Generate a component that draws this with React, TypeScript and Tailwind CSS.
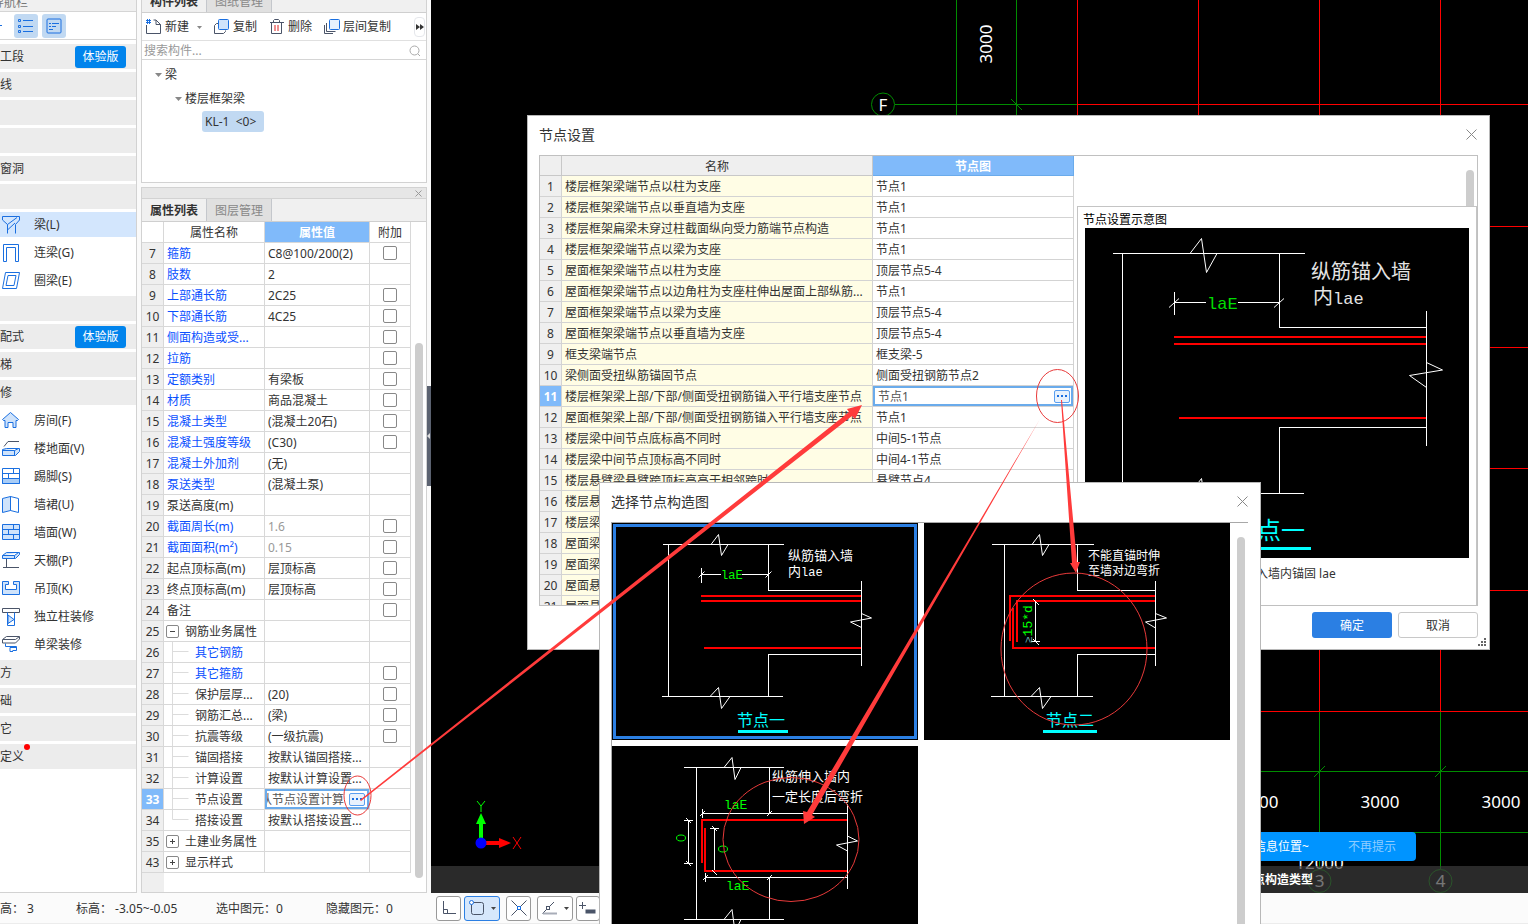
import React, {Fragment} from 'react'
import type {ReactNode} from 'react'

type PropertyRow = {
  no: number
  name: string
  value?: string
  check?: boolean
  kind?: 'link' | 'muted' | 'group' | 'child' | 'childLink'
  open?: boolean
}

const properties: PropertyRow[] = [
  {no: 7, name: '箍筋', value: 'C8@100/200(2)', check: true, kind: 'link'},
  {no: 8, name: '肢数', value: '2', kind: 'link'},
  {no: 9, name: '上部通长筋', value: '2C25', check: true, kind: 'link'},
  {no: 10, name: '下部通长筋', value: '4C25', check: true, kind: 'link'},
  {no: 11, name: '侧面构造或受...', check: true, kind: 'link'},
  {no: 12, name: '拉筋', check: true, kind: 'link'},
  {no: 13, name: '定额类别', value: '有梁板', check: true, kind: 'link'},
  {no: 14, name: '材质', value: '商品混凝土', check: true, kind: 'link'},
  {no: 15, name: '混凝土类型', value: '(混凝土20石)', check: true, kind: 'link'},
  {no: 16, name: '混凝土强度等级', value: '(C30)', check: true, kind: 'link'},
  {no: 17, name: '混凝土外加剂', value: '(无)', kind: 'link'},
  {no: 18, name: '泵送类型', value: '(混凝土泵)', kind: 'link'},
  {no: 19, name: '泵送高度(m)'},
  {no: 20, name: '截面周长(m)', value: '1.6', check: true, kind: 'muted'},
  {no: 21, name: '截面面积(m²)', value: '0.15', check: true, kind: 'muted'},
  {no: 22, name: '起点顶标高(m)', value: '层顶标高', check: true},
  {no: 23, name: '终点顶标高(m)', value: '层顶标高', check: true},
  {no: 24, name: '备注', check: true},
  {no: 25, name: '钢筋业务属性', kind: 'group', open: true},
  {no: 26, name: '其它钢筋', kind: 'childLink'},
  {no: 27, name: '其它箍筋', check: true, kind: 'childLink'},
  {no: 28, name: '保护层厚...', value: '(20)', check: true, kind: 'child'},
  {no: 29, name: '钢筋汇总...', value: '(梁)', check: true, kind: 'child'},
  {no: 30, name: '抗震等级', value: '(一级抗震)', check: true, kind: 'child'},
  {no: 31, name: '锚固搭接', value: '按默认锚固搭接...', kind: 'child'},
  {no: 32, name: '计算设置', value: '按默认计算设置...', kind: 'child'},
  {no: 33, name: '节点设置', value: '认节点设置计算', kind: 'child'},
  {no: 34, name: '搭接设置', value: '按默认搭接设置...', kind: 'child'},
  {no: 35, name: '土建业务属性', kind: 'group'},
  {no: 43, name: '显示样式', kind: 'group'},
]

const nodes: [string, string][] = [
  ['楼层框架梁端节点以柱为支座', '节点1'],
  ['楼层框架梁端节点以垂直墙为支座', '节点1'],
  ['楼层框架扁梁未穿过柱截面纵向受力筋端节点构造', '节点1'],
  ['楼层框架梁端节点以梁为支座', '节点1'],
  ['屋面框架梁端节点以柱为支座', '顶层节点5-4'],
  ['屋面框架梁端节点以边角柱为支座柱伸出屋面上部纵筋...', '节点1'],
  ['屋面框架梁端节点以梁为支座', '顶层节点5-4'],
  ['屋面框架梁端节点以垂直墙为支座', '顶层节点5-4'],
  ['框支梁端节点', '框支梁-5'],
  ['梁侧面受扭纵筋锚固节点', '侧面受扭钢筋节点2'],
  ['楼层框架梁上部/下部/侧面受扭钢筋锚入平行墙支座节点', '节点1'],
  ['屋面框架梁上部/下部/侧面受扭钢筋锚入平行墙支座节点', '节点1'],
  ['楼层梁中间节点底标高不同时', '中间5-1节点'],
  ['楼层梁中间节点顶标高不同时', '中间4-1节点'],
  ['楼层悬臂梁悬臂跨顶标高高于相邻跨时', '悬臂节点4'],
  ['楼层悬', ''],
  ['楼层梁', ''],
  ['屋面梁', ''],
  ['屋面梁', ''],
  ['屋面悬', ''],
  ['屋面悬', ''],
]

const B = '#1a6fe0'
const D = '#4a5468'
const L = '#cfe3fb'

const navIcons: Record<string, ReactNode> = {
  beam: (
    <g fill="none" stroke={B}>
      <path d="M6.500 18.500v-9l-5-4.500V1.500h17V5l-4 4.500v9" />
      <path d="M6.500 9.500l9.500-7M7 14.500l7-6.500" />
    </g>
  ),
  link: <path d="M2.500 18.500v-17h15v17h-3v-14h-9v14z" fill="none" stroke={B} />,
  ring: (
    <g fill="none" stroke={B}>
      <path d="M4.500 1.500h14l-3 16h-14z" />
      <path d="M7 4.500h8l-2 10H5z" />
    </g>
  ),
  house: <path d="M9.500 1.500l8 7-1 1h-1.500v7h-3v-5h-5v5h-3v-7H2.500l-1-1z" fill={L} stroke={B} />,
  floor: (
    <g fill="none">
      <path d="M18 2.500H7l-4 5" stroke={D} />
      <path d="M1.500 10.500l4-1h13v3l-4 4h-13zM1.500 11.500h12l4-2M13.500 11.500v5" fill={L} stroke={B} />
    </g>
  ),
  skirting: (
    <g stroke={B}>
      <path d="M1.500 1.500h17v15h-17z" fill="none" />
      <path d="M1.500 11.500h17v5h-17z" fill="#a9cdf7" />
      <path d="M1.500 6.500h17M12.500 1.500v5M7.500 6.500v5" />
    </g>
  ),
  dado: (
    <g stroke={B}>
      <path d="M1.500 3.500l8-2v14l-8 2z" fill={L} />
      <path d="M9.500 1.500l8 2v14l-8-2z" fill="none" />
    </g>
  ),
  wall: (
    <g stroke={B}>
      <path d="M1.500 1.500h17v15h-17z" fill={L} />
      <path d="M1.500 6.500h17M1.500 11.500h17M12.500 1.500v5M7.500 6.500v5M12.500 11.500v5" />
    </g>
  ),
  canopy: (
    <g fill="none">
      <path d="M1.500 4.500l4-3h13v2l-4 4h-13zM1.500 4.500h12l4-3M13.500 4.500v3" fill={L} stroke={B} />
      <path d="M5.500 8v8.500M2 16.500h16" stroke={D} />
    </g>
  ),
  ceiling: <path d="M1.500 2.500h6v3h-3v5h11v-5h-3v-3h6v13h-17z" fill={L} stroke={B} />,
  column: (
    <g fill="none">
      <path d="M1.500 1.500h17v4h-17z" stroke={D} />
      <path d="M6.500 5.500v13h7v-13" stroke={B} />
      <path d="M7 8l6 4.500-6 4z" fill={L} stroke={B} />
    </g>
  ),
  single: (
    <g fill="none">
      <path d="M1.500 4.500l4-3h13l-4 3zM1.500 5v3h13l4-4v-2" stroke={D} />
      <path d="M4.500 8.500v3h11v4h-4M15 12.500H9v4h3" stroke={B} />
    </g>
  ),
}

type NavRow = {label?: string; icon?: string; trial?: boolean; active?: boolean; dot?: boolean}

const navRows: NavRow[] = [
  {label: '工段', trial: true},
  {label: '线'},
  {},
  {},
  {label: '窗洞'},
  {},
  {label: '梁(L)', icon: 'beam', active: true},
  {label: '连梁(G)', icon: 'link'},
  {label: '圈梁(E)', icon: 'ring'},
  {},
  {label: '配式', trial: true},
  {label: '梯'},
  {label: '修'},
  {label: '房间(F)', icon: 'house'},
  {label: '楼地面(V)', icon: 'floor'},
  {label: '踢脚(S)', icon: 'skirting'},
  {label: '墙裙(U)', icon: 'dado'},
  {label: '墙面(W)', icon: 'wall'},
  {label: '天棚(P)', icon: 'canopy'},
  {label: '吊顶(K)', icon: 'ceiling'},
  {label: '独立柱装修', icon: 'column'},
  {label: '单梁装修', icon: 'single'},
  {label: '方'},
  {label: '础'},
  {label: '它'},
  {label: '定义', dot: true},
]

const Navigation = () => (
  <nav className="flex w-[137px] shrink-0 flex-col overflow-hidden border-r border-b border-[#d2d2d2] bg-white">
    <div className="flex h-3 shrink-0 items-end border-b border-[#d5d5d5] bg-[#f0f0f0]">
      <span className="-ml-2 leading-4 text-[#777]">导航栏</span>
    </div>
    <div className="flex h-7 shrink-0 items-center gap-1 border-b border-[#d5d5d5]">
      <span className="mr-2 h-px w-[2px] bg-[#1a6fe0]" />
      <button aria-label="列表" className="flex size-6 items-center justify-center rounded-[3px] bg-[#c1d9f2]">
        <svg width="16" height="16" fill="none" stroke={B}>
          <path d="M5 2.500h10M5 8.500h10M5 13.500h10" />
          <path d="M.5 1.500h2v2h-2zM.5 7.500h2v2h-2zM.5 12.500h2v2h-2z" />
        </svg>
      </button>
      <button aria-label="详情" className="flex size-6 items-center justify-center rounded-[3px] bg-[#c1d9f2]">
        <svg width="16" height="16" fill="none" stroke={B}>
          <rect x="1" y="1" width="14" height="14" rx="1" />
          <path d="M3 5.500h2M6 5.500h7M3 8.500h2M6 8.500h4M3 11.500h4" />
        </svg>
      </button>
    </div>
    <ul className="mt-1 flex flex-col gap-[3px]">
      {navRows.map((row, i) => (
        <li
          key={i}
          className={`flex h-[25px] items-center ${
            row.active ? 'bg-[#d3e6fd]' : row.icon ? 'bg-white' : 'bg-[#ececec]'
          }`}
        >
          {row.icon && (
            <svg width="20" height="19" className="mr-[13px] ml-px">
              {navIcons[row.icon]}
            </svg>
          )}
          <span className="relative">
            {row.label}
            {row.dot && <i className="absolute -top-1 -right-[6px] size-[6px] rounded-full bg-[#f00]" />}
          </span>
          {row.trial && (
            <button className="mr-[10px] ml-auto h-[22px] w-[51px] rounded-[3px] bg-[#0184ec] text-white">
              体验版
            </button>
          )}
        </li>
      ))}
    </ul>
  </nav>
)

const Tabs = ({names}: {names: string[]}) => (
  <div className="flex h-[23px] shrink-0 border-b border-[#cfcfcf] bg-[#f0f0f0]">
    <button className="w-[65px] border-r border-[#c4c7cc] pt-[2px] font-bold">{names[0]}</button>
    <button className="w-[65px] border-r border-[#c4c7cc] bg-[#e0e0e0] pt-[2px] text-[#888]">{names[1]}</button>
  </div>
)

const Caret = () => (
  <svg width="7" height="4">
    <path d="M0 0h7L3.500 4z" fill="#888" />
  </svg>
)

const ComponentList = () => (
  <section className="flex h-[183px] shrink-0 flex-col border border-t-0 border-[#d2d2d2] bg-white">
    <div className="flex h-[13px] shrink-0 flex-col justify-end overflow-hidden">
      <Tabs names={['构件列表', '图纸管理']} />
    </div>
    <div className="flex h-7 shrink-0 items-center border-b border-[#e0e0e0] pt-px pl-1">
      <button className="flex items-center gap-[3px]">
        <svg width="16" height="16" fill="none">
          <path d="M.5 6v8.500h14V5.500L10 1H7.500M10 1v4.500h4.500" stroke={D} />
          <path d="M0 1.500h5M0 3.500h5M1.500 0v5M3.500 0v5" stroke={B} />
        </svg>
        新建
        <svg width="5" height="3" className="ml-[5px]">
          <path d="M0 0h5L2.500 3z" fill="#888" />
        </svg>
      </button>
      <button className="ml-3 flex items-center gap-[3px]">
        <svg width="16" height="16" fill="none">
          <path d="M4.500 4.500h-2l-2 2v8h9l2-2v-1" stroke={D} />
          <rect x="4.500" y=".5" width="10" height="10" rx="1" fill={L} stroke={B} />
        </svg>
        复制
      </button>
      <button className="ml-3 flex items-center gap-[3px]">
        <svg width="16" height="16" fill="none">
          <path d="M1 3.500h14M4.500 3.500v-2l1-1h4l1 1v2M2.500 3.500v11h10v-11" stroke={D} />
          <path d="M6 6v6M9 6v6" stroke="#e02020" />
        </svg>
        删除
      </button>
      <button className="ml-3 flex items-center gap-[3px]">
        <svg width="16" height="16" fill="none">
          <path d="M.5 6v8.500H9M2.500 4v8.500h9" stroke={D} />
          <rect x="5.500" y=".5" width="10" height="10" rx="1" fill="#e6f1fd" stroke={B} />
        </svg>
        层间复制
      </button>
      <button aria-label="更多" className="mr-px ml-auto flex h-5 w-[11px] items-center justify-center rounded border border-gray-200">
        <svg width="8" height="6">
          <path d="M0 0l4 3-4 3zM4 0l4 3-4 3z" fill="#333" />
        </svg>
      </button>
    </div>
    <div className="flex h-[19px] shrink-0 items-center border-b border-[#d5d5d5] pt-[2px] pr-[6px] pl-[2px]">
      <input aria-label="搜索构件" placeholder="搜索构件..." className="w-full min-w-0 leading-4 placeholder:text-[#999]" />
      <svg width="12" height="12" fill="none" stroke="#aaa">
        <circle cx="5.500" cy="5.500" r="4.500" />
        <path d="M9 9l2 2" />
      </svg>
    </div>
    <ul className="flex flex-col pt-[3px] leading-6">
      <li className="flex items-center gap-[3px] pl-[13px]">
        <Caret />梁
      </li>
      <li className="flex items-center gap-[3px] pl-[33px]">
        <Caret />
        楼层框架梁
      </li>
      <li className="flex h-6 items-start pl-[60px]">
        <span className="w-[62px] rounded-[3px] bg-[#c1d9f2] px-[3px] leading-[21px] whitespace-pre">{'KL-1  <0>'}</span>
      </li>
    </ul>
  </section>
)

const More = () => (
  <button
    aria-label="更多"
    className="flex h-[13px] w-4 shrink-0 items-center justify-center gap-[2px] rounded-[2px] border border-[#5a9ff0] bg-[#e8f2fd]"
  >
    <i className="size-[2px] bg-[#1a6fe0]" />
    <i className="size-[2px] bg-[#1a6fe0]" />
    <i className="size-[2px] bg-[#1a6fe0]" />
  </button>
)

const PropertyName = ({row}: {row: PropertyRow}) => {
  if (row.kind === 'group') {
    return (
      <div className="flex h-5 items-center pl-[2px] leading-[22px]">
        <button
          aria-label={row.name}
          className="mr-[6px] flex size-[13px] items-center justify-center rounded-[2px] border border-[#888]"
        >
          <svg width="5" height="5" stroke="#444">
            <path d={row.open ? 'M0 2.500h5' : 'M0 2.500h5M2.500 0v5'} />
          </svg>
        </button>
        <span className="h-5">{row.name}</span>
      </div>
    )
  }
  if (row.kind === 'child' || row.kind === 'childLink') {
    return (
      <div className={`flex h-5 pl-2 leading-[22px] ${row.kind === 'childLink' ? 'text-[#0a50ff]' : ''}`}>
        <svg width="17" height="20" className="mr-[6px]" stroke="#dcdcdc">
          <path d={row.no === 34 ? 'M.5 0v9.500h16' : 'M.5 0v20M.5 9.500h16'} fill="none" />
        </svg>
        <span>{row.name}</span>
      </div>
    )
  }
  return <div className={`h-5 pl-[3px] leading-[22px] ${row.kind ? 'text-[#0a50ff]' : ''}`}>{row.name}</div>
}

const PropertyList = () => (
  <section className="mt-1 flex min-h-0 flex-1 flex-col border border-[#d2d2d2] bg-white">
    <div className="flex h-[11px] shrink-0 items-center justify-end border-b border-[#d2d2d2] bg-[#e6e6e6] pr-1">
      <button aria-label="关闭">
        <svg width="7" height="7" stroke="#999">
          <path d="M.5.5l6 6M6.500.5l-6 6" />
        </svg>
      </button>
    </div>
    <Tabs names={['属性列表', '图层管理']} />
    <div className="flex min-h-0 flex-1 overflow-hidden">
      <div className="w-[22px] shrink-0 bg-[#efefef]" />
      <table className="-ml-[22px] w-[269px] table-fixed border-separate border-spacing-0 self-start">
        <colgroup>
          <col className="w-[22px]" />
          <col className="w-[101px]" />
          <col className="w-[105px]" />
          <col className="w-[41px]" />
        </colgroup>
        <thead>
          <tr className="h-[21px] bg-white *:border-r *:border-b *:border-[#d8d8d8] *:p-0 *:font-normal">
            <th />
            <th>
              <div className="h-5 leading-[22px]">属性名称</div>
            </th>
            <th className="bg-[#80bafa] text-white">
              <div className="h-5 leading-[22px] font-bold">属性值</div>
            </th>
            <th>
              <div className="h-5 leading-[22px]">附加</div>
            </th>
          </tr>
        </thead>
        <tbody>
          {properties.map(row => (
            <tr key={row.no} className="h-[21px] *:border-r *:border-b *:border-[#d8d8d8] *:p-0">
              <td
                className={`text-center ${
                  row.no === 33 ? 'bg-[#80bafa] font-bold text-white' : 'bg-[#efefef]'
                }`}
              >
                <div className="h-5 leading-[22px]">{row.no}</div>
              </td>
              <td>
                <PropertyName row={row} />
              </td>
              {row.no === 33 ? (
                <td>
                  <div className="flex h-5 items-center border-2 border-[#6aabeb] pr-[2px]">
                    <input
                      aria-label={row.name}
                      defaultValue={row.value}
                      className="h-4 w-full min-w-0 pt-[2px] indent-[-7px] leading-4 text-[#555]"
                    />
                    <More />
                  </div>
                </td>
              ) : (
                <td className={row.kind === 'muted' ? 'text-[#999]' : ''}>
                  <div className="h-5 pl-[3px] leading-[22px] whitespace-nowrap">{row.value}</div>
                </td>
              )}
              <td>
                {row.check && (
                  <input
                    type="checkbox"
                    aria-label={`${row.name}附加`}
                    className="mx-auto block size-[14px] appearance-none rounded-[2px] border border-[#888]"
                  />
                )}
              </td>
            </tr>
          ))}
        </tbody>
      </table>
      <div className="mt-[121px] mr-[3px] mb-[14px] ml-auto w-2 rounded-full bg-[#cdcdcd]" />
    </div>
  </section>
)

const grid = {red: [226.5, 347.5, 468.5, 590.5, 711.5], col: [1077.5, 1198.5, 1319.5, 1440.5]}

const Drawing = () => (
  <svg className="absolute inset-0" width="1097" height="893" viewBox="431 0 1097 893" fontSize="17" fill="#fff">
    <g stroke="#f00" strokeWidth="1" shapeRendering="crispEdges">
      {grid.red.map(y => (
        <path key={y} d={`M1077 ${y}H1528`} />
      ))}
      {grid.col.map(x => (
        <path key={x} d={`M${x} 0V711`} />
      ))}
      <path d="M1077 104.500H1528" />
    </g>
    <g stroke="#008c00" fill="none">
      <path
        d="M956 0v115M1016.500 0v115M895 104.500h182M1319.500 712v157M1440.500 712v157M1261 771.500h267M1261 832.500h267"
        shapeRendering="crispEdges"
      />
      <path d="M1011 99l11 11M1314 777l11-11M1435 777l11-11" />
      <circle cx="883" cy="104.500" r="11.500" />
      <circle cx="1319.500" cy="881" r="11.500" />
      <circle cx="1440.500" cy="881" r="11.500" />
    </g>
    <g textAnchor="middle">
      <text x="883" y="111">F</text>
      <text x="1319.500" y="887">3</text>
      <text x="1440.500" y="887">4</text>
      <text x="1259" y="808">3000</text>
      <text x="1380" y="808">3000</text>
      <text x="1501" y="808">3000</text>
      <text x="1319.500" y="869">12000</text>
      <text transform="translate(992 44) rotate(-90)">3000</text>
    </g>
    <g stroke="#0f0" fill="#0f0">
      <path d="M481 843v-20" strokeWidth="4" />
      <path d="M481 813l5 11h-10z" stroke="none" />
      <path d="M477 801l4 5 4-5M481 806v6" fill="none" />
    </g>
    <path d="M481 843h20" stroke="#f00" strokeWidth="4" />
    <path d="M499 838l12 5-12 5z" fill="#f00" />
    <path d="M513 837l8 12M521 837l-8 12" stroke="#f00" />
    <circle cx="481" cy="843" r="5.500" fill="#00f" />
  </svg>
)

const Canvas = () => (
  <main className="relative min-w-0 flex-1 overflow-hidden bg-black">
    <Drawing />
    <div className="absolute bottom-0 left-0 h-[27px] w-full bg-[#3c3c3c]/70 pl-[810px] text-[12px] leading-[27px] font-bold text-white">
      节点构造类型
    </div>
    <div className="absolute bottom-8 left-[400px] flex h-[29px] w-[585px] items-center justify-end gap-[39px] rounded bg-[#0094ff] pr-5 text-white">
      <span>信息位置~</span>
      <button className="text-[#8fcdff]">不再提示</button>
    </div>
  </main>
)

const mono = "'Liberation Mono', 'Noto Sans CJK SC', monospace"

/* Beam anchorage detail, drawn on a 384 x 330 sheet */
const NodePreview = () => (
  <svg width="384" height="330" className="block bg-black" fill="none" stroke="#fff">
    <g shapeRendering="crispEdges">
      <path d="M28 25.500h192M37.500 25.500v240M194.500 25.500v74h147M341.500 83v135M341.500 199.500h-147v66M28 265.500h191" />
      <path d="M89.500 64v23M89.500 74.500H121M153 74.500h41" />
      <path d="M89 109h252M89 116h252M94 190h247" stroke="#f00" strokeWidth="2" />
      <path d="M150 320.500h76" stroke="#0ff" strokeWidth="3" />
    </g>
    <path d="M105 25.500l11.500-15 5 34 10.500-19M341.500 134.500l16 7.500-33 5.500 17 12M105 265.500l11.500-15 5 34 10.500-19" />
    <path d="M84 79.500l10-9M189 79.500l10-9" />
    <g stroke="none" fontFamily={mono}>
      <text x="122" y="81" fontSize="17" fill="#0d0">
        laE
      </text>
      <text x="226" y="51" fontSize="20" fill="#e4e4e4">
        纵筋锚入墙
      </text>
      <text x="228" y="76" fontSize="20" fill="#e4e4e4">
        内<tspan fontSize="17">lae</tspan>
      </text>
      <text x="148" y="311" fontSize="24" fill="#0ff">
        节点一
      </text>
    </g>
  </svg>
)

type SheetProps = {
  title?: string
  titleX?: number
  lines: string[]
  textX: number
  textY?: number
  size: number
  step: number
  children: ReactNode
}

const Sheet = ({title, titleX = 0, lines, textX, textY = 37, size, step, children}: SheetProps) => (
  <svg width="306" height="217" className="block bg-black" fill="none" stroke="#fff" fontFamily={mono}>
    {children}
    <g stroke="none" fill="#fff">
      {lines.map((line, i) => (
        <text key={line} x={textX} y={textY + i * step} fontSize={size}>
          {line.endsWith('lae') ? (
            <Fragment>
              内<tspan fontSize="12">lae</tspan>
            </Fragment>
          ) : (
            line
          )}
        </text>
      ))}
      {title && (
        <text x={titleX} y="203" fontSize="16" fill="#0ff">
          {title}
        </text>
      )}
    </g>
  </svg>
)

const SheetOne = () => (
  <Sheet title="节点一" titleX={125} lines={['纵筋锚入墙', '内lae']} textX={176} size={13} step={16}>
    <g shapeRendering="crispEdges">
      <path d="M51 21.500h121M56.500 21.500v152M156.500 21.500v46h93M249.500 58v85M249.500 131.500h-93v42M50 173.500h121" />
      <path d="M89.500 45v15M89.500 51.500H109M130 51.500h26" />
      <path d="M89 73h160M89 78h160M92 125h157" stroke="#f00" strokeWidth="2" />
      <path d="M126 208.500h50" stroke="#0ff" strokeWidth="3" />
      <rect x="2.500" y="2.500" width="301" height="212" stroke="#2b7fe3" strokeWidth="3" />
    </g>
    <path d="M99 21.500l7.500-10 3 21 6.500-11M98 173.500l8.500-9 3 21 8.500-12M249.500 90.500l10 4.500-21 4 11 5.500" />
    <path d="M86.500 54.500l6-6M153.500 54.500l6-6" />
    <text x="109" y="56" fontSize="12" fill="#0f0" stroke="none">
      laE
    </text>
  </Sheet>
)

const SheetTwo = () => (
  <Sheet title="节点二" titleX={122} lines={['不能直锚时伸', '至墙对边弯折']} textX={164} size={12} step={15}>
    <g shapeRendering="crispEdges">
      <path d="M68 21.500h102M80.500 21.500v152M153.500 21.500v46h78M231.500 58v85M231.500 131.500h-78v42M67 173.500h102" />
      <path d="M111.500 78v41M107 118.500h9" />
      <path d="M86 118V73h145M93 119V78h138M89 85v40h142" stroke="#f00" strokeWidth="2" />
      <path d="M119 208.500h54" stroke="#0ff" strokeWidth="3" />
    </g>
    <path d="M108 21.500l7.500-10 3 21 6.500-11M107 173.500l8.500-9 3 21 8.500-12M231.500 90.500l11 4.500-21 4 10 6" />
    <path d="M109 76l6 6M109 116l6 6" />
    <text transform="translate(108 120) rotate(-90)" fontSize="13" stroke="none" fill="#0f0">
      <tspan fill="#6ab0b0" fontSize="11">≥</tspan>15*d
    </text>
  </Sheet>
)

const SheetThree = () => (
  <Sheet lines={['纵筋伸入墙内', '一定长度后弯折']} textX={160} textY={35} size={13} step={20}>
    <g shapeRendering="crispEdges">
      <path d="M72 21.500h100M84.500 21.500v152M157.500 21.500v46M235.500 58v85M157.500 131.500v42M72 173.500h100" />
      <path d="M90.500 63v9M90.500 67.500h145M93.500 127v9M93.500 131.500h142M76.500 74v44M72 74.500h9M72 117.500h9M102.500 82v44M98 82.500h9" />
      <path d="M90 117V74h145M93 82v43h142" stroke="#f00" strokeWidth="2" />
    </g>
    <path d="M112 21.500l8-10 3 22 6-12M112 173.500l8-10 3 22 6-12M235.500 90l10 5-21 4 11 6" />
    <path d="M88 70l5-5M155 70l5-5M91 134l5-5M155 134l5-5M74 72l5 5M74 115l5 5M100 80l5 5M100 124l5 5" />
    <g stroke="none" fill="#0f0" fontSize="13">
      <text x="112" y="63">laE</text>
      <text x="114" y="144">laE</text>
    </g>
    <g stroke="#0f0">
      <ellipse cx="69" cy="92" rx="4.500" ry="3" />
      <ellipse cx="111" cy="103" rx="4.500" ry="3" />
    </g>
  </Sheet>
)

const Close = () => (
  <button aria-label="关闭">
    <svg width="11" height="11" stroke="#888">
      <path d="M.5.5l10 10M10.500.5l-10 10" />
    </svg>
  </button>
)

const NodeDialog = () => (
  <div
    role="dialog"
    aria-label="节点设置"
    className="absolute top-[115px] left-[527px] flex h-[535px] w-[963px] flex-col border border-[#b8b8b8] bg-white px-[11px]"
  >
    <header className="mb-[2px] flex h-[37px] shrink-0 items-center justify-between pr-px text-[14px]">
      节点设置
      <Close />
    </header>
    <div className="flex h-[451px] shrink-0 overflow-hidden border border-[#c0c0c0]">
      <table className="w-[534px] shrink-0 table-fixed border-separate border-spacing-0 self-start">
        <colgroup>
          <col className="w-[22px]" />
          <col className="w-[311px]" />
          <col className="w-[201px]" />
        </colgroup>
        <thead>
          <tr className="h-5 *:border-r *:border-b *:border-[#c8c8c8] *:bg-[#efefef] *:p-0 *:font-normal">
            <th />
            <th>
              <div className="h-[19px] leading-[21px]">名称</div>
            </th>
            <th className="border-[#6aabeb]! bg-[#80bafa]! text-white">
              <div className="h-[19px] leading-[21px] font-bold">节点图</div>
            </th>
          </tr>
        </thead>
        <tbody>
          {nodes.map(([name, value], i) => (
            <tr key={i} className="h-[21px] *:border-r *:border-b *:border-[#d3d3d3] *:p-0 *:whitespace-nowrap">
              <td className={`text-center ${i === 10 ? 'bg-[#80bafa] font-bold text-white' : 'bg-[#efefef]'}`}>
                <div className="h-5 leading-[22px]">{i + 1}</div>
              </td>
              <td className="bg-[#fffde5]">
                <div className="h-5 pl-[3px] leading-[22px]">{name}</div>
              </td>
              {i === 10 ? (
                <td>
                  <div className="flex h-5 items-center border-2 border-[#6aabeb] pr-px pl-[3px]">
                    <input
                      aria-label={name}
                      defaultValue={value}
                      className="h-4 w-full min-w-0 pt-[2px] leading-4 text-[#555]"
                    />
                    <More />
                  </div>
                </td>
              ) : (
                <td>
                  <div className="h-5 pl-[3px] leading-[22px]">{value}</div>
                </td>
              )}
            </tr>
          ))}
        </tbody>
      </table>
      <div className="ml-[3px] flex min-w-0 flex-1 flex-col">
        <div className="mt-[14px] mr-[3px] ml-auto h-9 w-2 shrink-0 rounded-t-full bg-[#cdcdcd]" />
        <div className="flex flex-1 flex-col border-t border-r border-l border-[#c4c4c4] pl-[7px]">
          <p className="-ml-[2px] h-[21px] shrink-0 leading-[26px] text-black">节点设置示意图</p>
          <NodePreview />
          <p className="ml-[171px] leading-8">入墙内锚固 lae</p>
        </div>
      </div>
    </div>
    <footer className="mt-[6px] flex justify-end gap-[6px]">
      <button className="h-[26px] w-20 rounded-[3px] bg-[#2b7fe3] pt-[2px] text-white">确定</button>
      <button className="h-[26px] w-20 rounded-[3px] border border-[#c8c8c8] pt-[2px]">取消</button>
    </footer>
    <svg width="8" height="8" className="absolute right-[3px] bottom-[3px]" fill="#666">
      <path d="M6 0h2v2H6zM6 3h2v2H6zM3 3h2v2H3zM6 6h2v2H6zM3 6h2v2H3zM0 6h2v2H0z" />
    </svg>
  </div>
)

const PickerDialog = () => (
  <div
    role="dialog"
    aria-label="选择节点构造图"
    className="absolute top-[482px] bottom-0 left-[599px] flex w-[662px] flex-col overflow-hidden border border-b-0 border-[#b8b8b8] bg-white pr-3 pl-[11px]"
  >
    <header className="mb-[2px] flex h-[37px] shrink-0 items-center justify-between text-[14px]">
      选择节点构造图
      <Close />
    </header>
    <div className="flex min-h-0 flex-1 border-t border-l border-[#a8a8a8]">
      <div className="grid grid-cols-[306px_306px] content-start gap-[6px]">
        <SheetOne />
        <SheetTwo />
        <SheetThree />
      </div>
      <div className="mt-[14px] mr-[3px] ml-auto w-2 rounded-t-full bg-[#cdcdcd]" />
    </div>
  </div>
)

const Annotations = () => (
  <svg className="pointer-events-none absolute inset-0 h-full w-full" fill="#ff3b3b">
    <g fill="none" stroke="#e83a3a">
      <ellipse cx="357.500" cy="795.500" rx="13.500" ry="19.500" />
      <ellipse cx="1057.500" cy="396" rx="21" ry="26.500" />
      <ellipse cx="1074" cy="649" rx="73" ry="76" />
      <ellipse cx="791" cy="839.500" rx="68" ry="62" />
    </g>
    <path d="M360 800L849 412l-2-3 15-4-7 14-3-3L361 801z" />
    <path d="M1061 400l11 163h-2l6 10 4-11h-3L1062 400z" />
    <path d="M1040 419L807 812l-4-1 1 13 11-7-3-2z" />
  </svg>
)

const tool = 'flex h-[25px] items-center justify-center gap-[6px] rounded-[3px] border border-[#999] bg-white'

const StatusBar = () => (
  <footer className="flex h-[31px] shrink-0 items-center overflow-hidden border-b border-[#ececec] bg-[#fbfbfb]">
    <div className="flex w-[436px] shrink-0 items-center pt-[2px] whitespace-pre">
      <span className="w-[76px]">高： 3</span>
      <span className="w-[140px]">标高： -3.05~-0.05</span>
      <span className="w-[110px]">选中图元：0</span>
      <span>隐藏图元：0</span>
    </div>
    <div className="flex items-center gap-[6px]">
      <button aria-label="正交" className={`${tool} w-[25px]`}>
        <svg width="14" height="14" fill="none" stroke={D}>
          <path d="M1.500 0v12.500H14M1.500 8.500h4v4" />
        </svg>
      </button>
      <button aria-label="对象捕捉" className={`${tool} -ml-[3px] w-9 border-[#2b7fe3]! bg-[#d6e7fb]!`}>
        <svg width="16" height="16" fill="none">
          <rect x="2.500" y="2.500" width="12" height="12" rx="2" stroke={D} />
          <circle cx="2.500" cy="2.500" r="2" fill="#fff" stroke={B} />
        </svg>
        <svg width="5" height="3">
          <path d="M0 0h5L2.500 3z" fill="#444" />
        </svg>
      </button>
      <button aria-label="交点" className={`${tool} w-[25px]`}>
        <svg width="16" height="16" fill="none">
          <path d="M.5.5l15 15M15.500.5l-15 15" stroke={D} />
          <rect x="6.500" y="6.500" width="3" height="3" fill="#fff" stroke={B} />
        </svg>
      </button>
      <button aria-label="角度" className={`${tool} w-9`}>
        <svg width="16" height="14" fill="none">
          <path d="M.5 12.500L12 1" stroke={D} />
          <path d="M1 12.500h14" stroke="#a8adb8" strokeWidth="2" />
          <rect x="4.500" y="5.500" width="3" height="3" fill="#fff" stroke={D} />
        </svg>
        <svg width="5" height="3">
          <path d="M0 0h5L2.500 3z" fill="#444" />
        </svg>
      </button>
      <button aria-label="动态输入" className={`${tool} -ml-[3px] w-6`}>
        <svg width="18" height="14" fill="none" stroke={D} className="shrink-0">
          <path d="M0 4.500h7M3.500 1v7" />
          <rect x="7" y="9" width="9" height="3" fill={D} />
        </svg>
      </button>
    </div>
  </footer>
)

const App = () => (
  <div className="relative flex h-screen w-full flex-col overflow-hidden bg-[#fafafa] font-['Noto_Sans','Noto_Sans_CJK_SC',sans-serif] text-[12px] text-[#333]">
    <div className="flex min-h-0 flex-1">
      <Navigation />
      <div className="ml-1 flex w-[286px] shrink-0 flex-col">
        <ComponentList />
        <PropertyList />
      </div>
      <div className="flex w-1 shrink-0 flex-col pt-[386px]">
        <div className="flex h-[100px] items-center bg-[#5b6270]">
          <svg width="3" height="6">
            <path d="M3 0v6L0 3z" fill="#ddd" />
          </svg>
        </div>
      </div>
      <Canvas />
    </div>
    <StatusBar />
    <NodeDialog />
    <PickerDialog />
    <Annotations />
  </div>
)

export default App
